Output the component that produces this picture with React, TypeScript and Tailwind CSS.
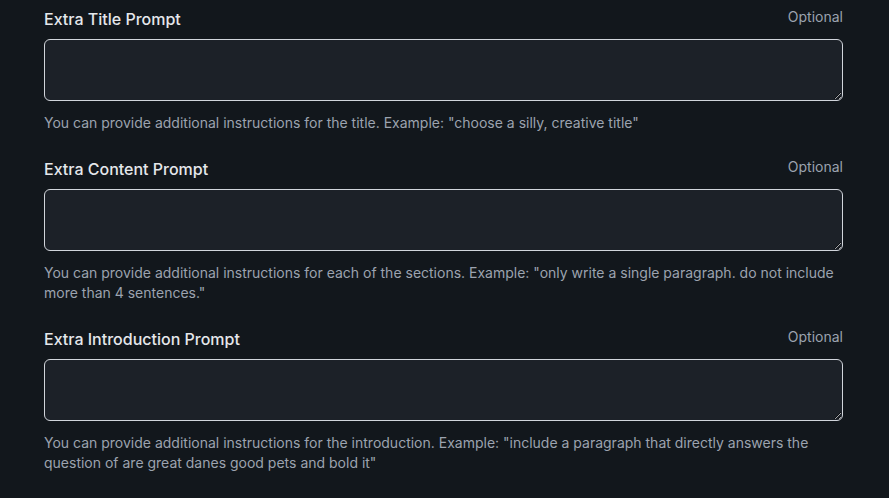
import React from "react";

const sections = [
  {
    label: "Extra Title Prompt",
    help: 'You can provide additional instructions for the title. Example: "choose a silly, creative title"',
  },
  {
    label: "Extra Content Prompt",
    help: 'You can provide additional instructions for each of the sections. Example: "only write a single paragraph. do not include more than 4 sentences."',
  },
  {
    label: "Extra Introduction Prompt",
    help: 'You can provide additional instructions for the introduction. Example: "include a paragraph that directly answers the question of are great danes good pets and bold it"',
  },
];

export default function App() {
  return (
    <div className="min-h-[498px] w-full bg-[#12171c] pt-[7px] font-['Inter',sans-serif]">
      <div className="ml-[44px] flex w-[799px] flex-col gap-6">
        {sections.map((s) => (
          <div key={s.label} className="flex flex-col">
            <div className="flex items-center justify-between">
              <label className="text-base leading-6 font-medium text-[#e5e7eb]">{s.label}</label>
              <span className="text-sm leading-5 text-[#9ca3af] -mt-[5px]">Optional</span>
            </div>
            <textarea className="mt-2 h-[62px] w-full rounded-md border border-[#d1d5db] bg-[#1c2128] px-3 py-2 text-sm text-[#e5e7eb] outline-none" />
            <p className="mt-3 text-sm leading-5 text-[#9ca3af]">{s.help}</p>
          </div>
        ))}
      </div>
    </div>
  );
}
